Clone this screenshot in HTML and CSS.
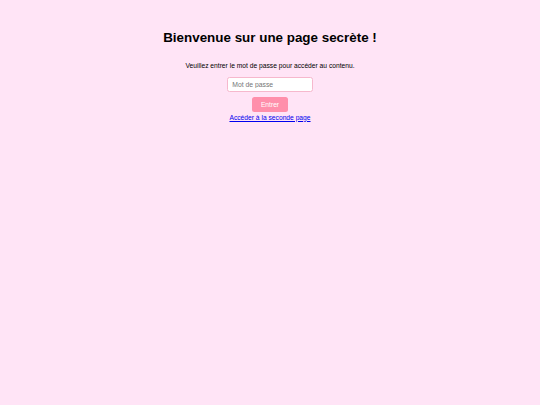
FILE: index.html
```html
<!DOCTYPE html>
<html lang="fr">
<head>
<meta charset="utf-8">
<title>Page secrète</title>
<link rel="stylesheet" href="styles.css">
</head>
<body>
<main class="page">
  <h1 class="title">Bienvenue sur une page secrète !</h1>
  <p class="intro">Veuillez entrer le mot de passe pour accéder au contenu.</p>
  <form class="login">
    <input class="password" type="password" placeholder="Mot de passe">
    <button class="submit" type="button">Entrer</button>
  </form>
  <a class="next" href="#">Accéder à la seconde page</a>
</main>
</body>
</html>
```
FILE: styles.css
```css
html, body {
  margin: 0;
  padding: 0;
  background: #ffe4f6;
  height: 100%;
}
body {
  font-family: "Liberation Sans", Arial, sans-serif;
  color: #000;
}
.page {
  display: flex;
  flex-direction: column;
  align-items: center;
  padding-top: 29px;
}
.title {
  font-size: 13.4px;
  font-weight: bold;
  margin: 0;
  line-height: 18px;
}
.intro {
  font-size: 6.7px;
  margin: 14.6px 0 0;
  line-height: 8px;
}
.login {
  display: flex;
  flex-direction: column;
  align-items: center;
  gap: 4.5px;
  margin-top: 7.4px;
}
.password {
  box-sizing: border-box;
  width: 85.5px;
  height: 15.5px;
  padding: 0 4px;
  border: 1px solid #f6b8cd;
  border-radius: 2.5px;
  background: #fff;
  font-family: "Liberation Sans", Arial, sans-serif;
  font-size: 6.8px;
  outline: none;
}
.password::placeholder {
  color: #757575;
}
.submit {
  box-sizing: border-box;
  width: 36px;
  height: 15px;
  padding: 0;
  border: none;
  border-radius: 2.5px;
  background: #ff8fab;
  color: #fff;
  font-family: "Liberation Sans", Arial, sans-serif;
  font-size: 6.7px;
}
.next {
  margin-top: 1.8px;
  font-size: 6.7px;
  line-height: 8px;
  color: #0000ee;
}
```
